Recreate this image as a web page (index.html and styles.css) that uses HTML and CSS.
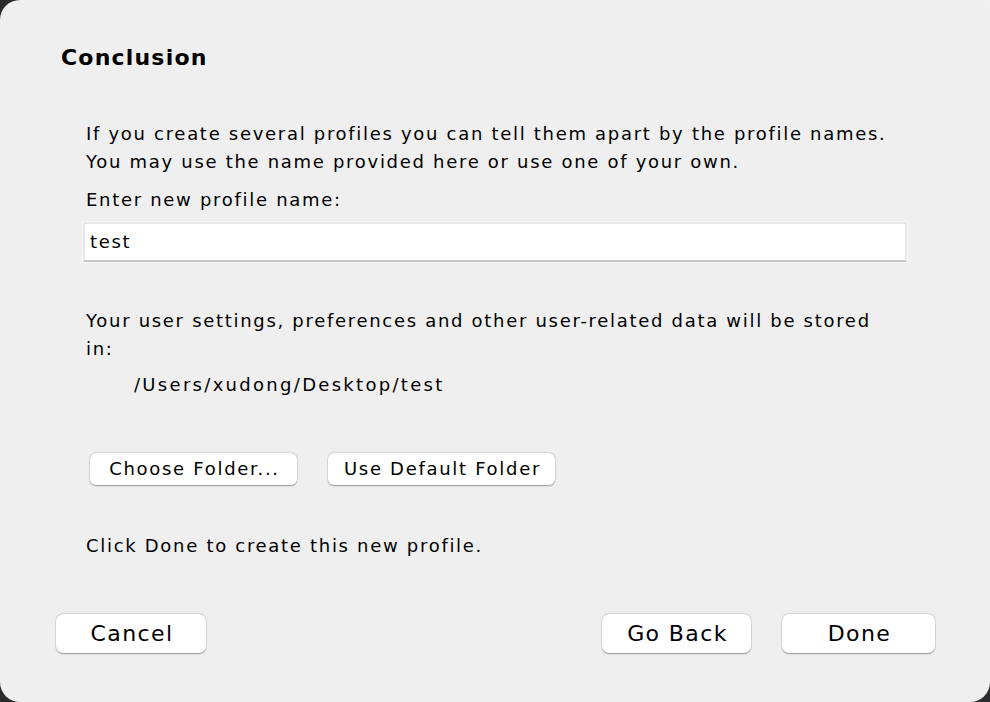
FILE: index.html
```html
<!DOCTYPE html>
<html>
<head>
<meta charset="utf-8">
<link rel="stylesheet" href="styles.css">
</head>
<body>
<div class="window">
  <h1 class="title">Conclusion</h1>
  <div class="content">
    <p class="para">If you create several profiles you can tell them apart by the profile names.<br>You may use the name provided here or use one of your own.</p>
    <p class="label">Enter new profile name:</p>
    <div class="input">test</div>
    <p class="para stored">Your user settings, preferences and other user-related data will be stored<br>in:</p>
    <p class="path">/Users/xudong/Desktop/test</p>
    <div class="folder-row">
      <button class="btn small choose">Choose Folder...</button>
      <button class="btn small default">Use Default Folder</button>
    </div>
    <p class="para done-note">Click Done to create this new profile.</p>
  </div>
  <div class="footer">
    <button class="btn big cancel">Cancel</button>
    <div class="right">
      <button class="btn big back">Go Back</button>
      <button class="btn big done">Done</button>
    </div>
  </div>
</div>
</body>
</html>
```

FILE: styles.css
```css
html, body {
  margin: 0;
  padding: 0;
  width: 990px;
  height: 702px;
  overflow: hidden;
}
body {
  background: linear-gradient(#f0f0f0, #f0f0f0) top right / 30px 30px no-repeat, #2b2b2d;
  font-family: "DejaVu Sans", "Liberation Sans", sans-serif;
  color: #000;
}
.window {
  box-sizing: border-box;
  width: 990px;
  height: 702px;
  background: #efefef;
  border-radius: 20px;
  position: relative;
  padding: 43px 0 0 0;
}
.title {
  margin: 0 0 0 61px;
  font-size: 22px;
  font-weight: bold;
  line-height: 30px;
  letter-spacing: 1.2px;
}
.content {
  margin: 47px 0 0 86px;
  width: 822px;
}
.para, .label, .path {
  margin: 0;
  font-size: 18px;
  line-height: 28px;
  letter-spacing: 1.7px;
}
.label {
  margin-top: 10px;
}
.input {
  box-sizing: border-box;
  margin: 8px 0 0 -3px;
  width: 824px;
  height: 40px;
  background: #fff;
  border: 2px solid #e8e8e8;
  border-bottom: 2px solid #c8c8c8;
  box-shadow: 0 0 0 1px #f8f8f8;
  font-size: 18px;
  line-height: 35px;
  padding-left: 5px;
  letter-spacing: 1.7px;
}
.stored {
  margin-top: 45px;
}
.path {
  margin: 8px 0 0 48px;
  letter-spacing: 2.3px;
}
.folder-row {
  display: flex;
  gap: 31px;
  margin: 54px 0 0 4px;
}
.btn {
  font-family: "DejaVu Sans", "Liberation Sans", sans-serif;
  background: #fff;
  border: none;
  border-radius: 6px;
  box-shadow: 0 0.5px 1.5px rgba(0,0,0,0.35), 0 0 0 0.5px rgba(0,0,0,0.08);
  color: #000;
  padding: 0;
  margin: 0;
}
.btn.small {
  height: 32px;
  font-size: 18px;
  line-height: 32px;
  letter-spacing: 1.7px;
  padding-left: 2px;
}
.choose { width: 207px; }
.default { width: 227px; }
.done-note {
  margin-top: 47px;
}
.footer {
  position: absolute;
  left: 56px;
  right: 55px;
  top: 614px;
  display: flex;
  justify-content: space-between;
}
.right {
  display: flex;
  gap: 31px;
}
.btn.big {
  height: 39px;
  font-size: 22px;
  line-height: 39px;
  border-radius: 7px;
  letter-spacing: 1.4px;
  padding-left: 2px;
}
.cancel { width: 150px; }
.back { width: 149px; }
.done { width: 153px; }
```
